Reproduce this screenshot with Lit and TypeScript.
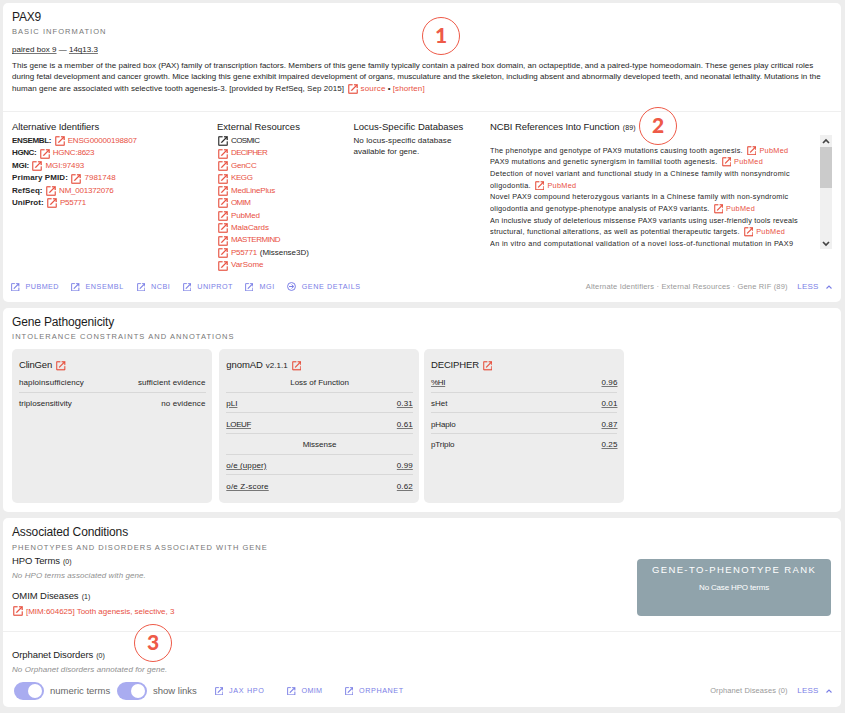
import { LitElement, html, css, svg } from "lit";
import { customElement } from "lit/decorators.js";

const OPEN = svg`<path d="M19.2 19.2H4.8V4.8H11V3H4.6C3.7 3 3 3.7 3 4.6v14.8c0 .9.7 1.6 1.6 1.6h14.8c.9 0 1.6-.7 1.6-1.6V13h-1.8v6.2zM14 3v2h3.6L8.2 14.4l1.4 1.4L19 6.4V10h2V3h-7z" stroke="currentColor" stroke-width=".4"/>`;
const openIcon = (cls = "") => html`<svg class="icon ${cls}" viewBox="2.5 2.5 19 19">${OPEN}</svg>`;
const arrowIcon = html`<svg class="icon round" viewBox="0 0 18 18"><g fill="none" stroke="currentColor" stroke-width="2"><circle cx="9" cy="9" r="7.9"/><path d="M4 9h9M9.3 5l4 4-4 4"/></g></svg>`;
const chevron = html`<svg class="chev" viewBox="0 0 6 4"><path d="M.5 3.5 3 1l2.5 2.5" fill="none" stroke="currentColor" stroke-width="1.1"/></svg>`;

// Text run with its own tracking.
const t = (text: string, ls = 0, cls = "") =>
  html`<span class=${cls} style="letter-spacing:${ls}px">${text}</span>`;
const link = (text: string, ls = 0) => html`<a class="link">${openIcon()}${t(text, ls)}</a>`;

const IDS: [string, number, string, number][] = [
  ["ENSEMBL:", -0.33, "ENSG00000198807", -0.17],
  ["HGNC:", -0.4, "HGNC:8623", -0.22],
  ["MGI:", -0.2, "MGI:97493", -0.1],
  ["Primary PMID:", 0.1, "7981748", 0],
  ["RefSeq:", 0.05, "NM_001372076", -0.2],
  ["UniProt:", 0, "P55771", -0.3],
];
const RES: [string, number, string?][] = [
  ["COSMIC", -0.6], ["DECIPHER", -0.65], ["GenCC", -0.25], ["KEGG", -0.4], ["MedLinePlus", -0.2],
  ["OMIM", -0.6], ["PubMed", -0.15], ["MalaCards", -0.1], ["MASTERMIND", -0.47],
  ["P55771", -0.3, "(Missense3D)"], ["VarSome", -0.05],
];
const REFS: [string, number, boolean?][] = [
  ["The phenotype and genotype of PAX9 mutations causing tooth agenesis.", 0.255, true],
  ["PAX9 mutations and genetic synergism in familial tooth agenesis.", 0.262, true],
  ["Detection of novel variant and functional study in a Chinese family with nonsyndromic", 0.288],
  ["oligodontia.", 0.3, true],
  ["Novel PAX9 compound heterozygous variants in a Chinese family with non-syndromic", 0.27],
  ["oligodontia and genotype-phenotype analysis of PAX9 variants.", 0.25, true],
  ["An inclusive study of deleterious missense PAX9 variants using user-friendly tools reveals", 0.205],
  ["structural, functional alterations, as well as potential therapeutic targets.", 0.24, true],
  ["An in vitro and computational validation of a novel loss-of-functional mutation in PAX9", 0.318],
];

@customElement("app-root")
export class AppRoot extends LitElement {
  static styles = css`
    :host { display: block; box-sizing: border-box; width: 845px; height: 713px; background: #ededed; padding: 3px 4px 0 3px;
      font: 8px "Liberation Sans", Arial, sans-serif; color: #262626; white-space: nowrap; overflow: hidden; }
    .card { background: #fff; border-radius: 5px; box-sizing: border-box; padding: 7px 0 0; position: relative; }
    .c1 { height: 298.5px; }
    .c2 { height: 204px; margin-top: 6.5px; }
    .c3 { height: 189px; margin-top: 6px; }
    .pad { padding: 0 9px; }
    .title { font-size: 12px; line-height: 14px; color: #1c1c1c; }
    .sub { font-size: 7.5px; line-height: 10px; margin-top: 3px; color: #777; }
    .h { font-size: 9.5px; line-height: 12px; color: #222; }
    .cnt { font-size: 7px; margin-left: 0.5px; }
    u { text-decoration-thickness: 1px; text-underline-offset: 1px; text-decoration-color: #777; }
    .gene { margin-top: 7.2px; line-height: 12px; }
    .desc { margin-top: 3.8px; line-height: 11.4px; }
    .line { display: flex; align-items: center; }
    .icon { width: 10px; height: 10px; fill: currentColor; flex: none; display: block; }
    .link { color: #e8503f; display: inline-flex; align-items: center; gap: 3px; margin-left: 3.5px; }
    .plain { margin: 0; }
    .rule { height: 1px; background: #efefef; }
    .gap { margin-top: 16.3px; }
    .cols { display: grid; grid-template-columns: 205px 136.5px 136.5px 1fr; padding: 9.2px 9px 0; height: 129px; }
    .list { margin-top: 2.3px; }
    .list > div { height: 12.45px; line-height: 12.45px; }
    .ext .link { margin-left: 1px; gap: 3px; }
    .ext .dark { color: #262626; }
    .after { margin-left: 3px; }
    .locus { margin-top: 2.4px; line-height: 11.4px; }
    .scroll { display: flex; justify-content: space-between; height: 114px; margin-top: 1.8px; overflow: hidden; }
    .refs { padding-top: 9.2px; font-size: 7.3px; }
    .refs .line { height: 11.67px; line-height: 11.67px; }
    .refs .icon { width: 9.5px; height: 9.5px; }
    .refs .link { margin-left: 4px; }
    .bar { width: 12px; height: 114px; background: #f0f0f0; color: #444; display: flex; flex-direction: column; align-items: center; }
    .bar svg { width: 8px; height: 12px; flex: none; }
    .thumb { width: 12px; height: 41px; background: #cbcbcb; margin-bottom: auto; }
    .foot { display: flex; align-items: center; justify-content: space-between; height: 18px; padding: 0 9px 0 8px; }
    .f1 { margin-top: 28.2px; }
    .btns { display: grid; color: #7a7ee6; font-size: 7.2px; }
    .b1 { grid-template-columns: 60px 65.5px 46.3px 62.2px 41.7px auto; }
    .btns span { white-space: nowrap; }
    .btn { display: flex; align-items: center; gap: 6px; line-height: 12px; }
    .btn .icon { width: 8.5px; height: 8.5px; }
    .btn .round { width: 9px; height: 9px; }
    .meta { display: flex; align-items: center; font-size: 7.5px; color: #999; line-height: 12px; margin-right: 0.5px; }
    .less { color: #7a7ee6; font-size: 8px; margin-left: 9.5px; display: flex; align-items: center; }
    .chev { width: 6px; height: 4px; margin-left: 7px; }
    .tiles { display: flex; padding: 0 9px; margin-top: 7px; }
    .tile { width: 200px; height: 153.5px; box-sizing: border-box; background: #ededed; border-radius: 5px; padding: 9px 6.5px 0 7px; }
    .t2 { margin-left: 7.3px; } .t3 { margin-left: 4.7px; }
    .tile .h { display: flex; align-items: center; height: 14px; }
    .tile .h .icon { color: #e8503f; margin: 2px 0 0 4px; width: 9.5px; height: 9.5px; }
    .ver { font-size: 8px; margin-left: 3px; padding-top: 1px; }
    .row { display: flex; justify-content: space-between; align-items: center; height: 20.65px; padding-top: 2.2px; box-sizing: border-box; border-bottom: 1px solid #d8d8d8; }
    .row:last-child { border-bottom-color: transparent; }
    .row.mid { justify-content: center; }
    .none { font-style: italic; color: #909090; line-height: 12px; }
    .c3 .sub { margin-top: 3.8px; }
    .cond { display: flex; justify-content: space-between; height: 78.7px; }
    .rank { width: 194.5px; height: 57px; margin: 6.7px 0.7px 0 0; background: #90a3ab; border-radius: 4px; color: #fff; text-align: center; }
    .rank .rt { font-size: 9.5px; line-height: 12px; margin: 5px 0 7px; }
    .rank div + div { line-height: 10px; }
    .hpo { margin: 2px 0 2.4px; }
    .omim { margin-top: 7.8px; }
    .dis { height: 14px; margin-top: 1.3px; }
    .dis .link { margin-left: 1px; gap: 3px; }
    .orph { padding-top: 16.5px; }
    .orph .none { margin-top: 2px; }
    .f3 { margin-top: 6px; }
    .left { display: flex; align-items: center; color: #666; font-size: 9.5px; }
    .toggle { width: 30px; height: 18px; border-radius: 9px; background: #a9acf0; box-sizing: border-box; padding: 2px; display: flex; justify-content: flex-end; margin: 0 6px 0 3px; }
    .toggle + span { width: 64px; }
    .knob { width: 14px; height: 14px; border-radius: 50%; background: #fff; }
    .b3 { grid-template-columns: 72.5px 57.5px auto; margin-left: -2.5px; }
    .mark { position: absolute; box-sizing: border-box; width: 38px; height: 38px; border: 1px solid #ee5a48; border-radius: 50%; color: #ee5a48;
      font: 900 21px/34px Lato, sans-serif; text-align: center; }
    .m1 { left: 419px; top: 14px; } .m2 { left: 636px; top: 103.5px; } .m3 { left: 131px; top: 106px; }
  `;

  private row(a: string, la: number, b: string, ua = true, ub = true) {
    const A = t(a, la), B = t(b, 0.1);
    return html`<div class="row">${ua ? html`<u>${A}</u>` : A}${ub ? html`<u>${B}</u>` : B}</div>`;
  }
  private btn(label: string, ls: number, icon = openIcon()) {
    return html`<div class="btn">${icon}${t(label, ls)}</div>`;
  }

  render() {
    return html`
      <section class="card c1">
        <div class="pad">
          <div class="title">${t("PAX9", -0.2)}</div>
          <div class="sub">${t("BASIC INFORMATION", 1.06)}</div>
          <div class="gene"><u>${t("paired box 9", 0.04)}</u> — <u>14q13.3</u></div>
          <div class="desc">
            <div>${t("This gene is a member of the paired box (PAX) family of transcription factors. Members of this gene family typically contain a paired box domain, an octapeptide, and a paired-type homeodomain. These genes play critical roles", 0.021)}</div>
            <div>${t("during fetal development and cancer growth. Mice lacking this gene exhibit impaired development of organs, musculature and the skeleton, including absent and abnormally developed teeth, and neonatal lethality. Mutations in the", 0.001)}</div>
            <div class="line">${t("human gene are associated with selective tooth agenesis-3. [provided by RefSeq, Sep 2015]", 0.048)}${link("source", 0.16)}<span>&nbsp;•&nbsp;</span><a class="link plain">${t("[shorten]", 0.09)}</a></div>
          </div>
        </div>
        <div class="rule gap"></div>
        <div class="cols">
          <div>
            <div class="h">${t("Alternative Identifiers", -0.07)}</div>
            <div class="list">${IDS.map(([a, la, b, lb]) => html`<div class="line"><b>${t(a, la)}</b>${link(b, lb)}</div>`)}</div>
          </div>
          <div>
            <div class="h">External Resources</div>
            <div class="list ext">${RES.map(([n, ls, extra], i) => html`<div class="line"><a class="link ${i ? "" : "dark"}">${openIcon()}${t(n, ls)}</a>${extra ? t(extra, -0.03, "after") : ""}</div>`)}</div>
          </div>
          <div>
            <div class="h">Locus-Specific Databases</div>
            <div class="locus"><div>${t("No locus-specific database", 0.09)}</div><div>${t("available for gene.", 0.02)}</div></div>
          </div>
          <div>
            <div class="h">${t("NCBI References Into Function", -0.068)} <span class="cnt">${t("(89)", 0.2)}</span></div>
            <div class="scroll">
              <div class="refs">${REFS.map(([s, ls, pm]) => html`<div class="line">${t(s, ls)}${pm ? link("PubMed", 0.3) : ""}</div>`)}</div>
              <div class="bar">
                <svg viewBox="0 0 8 12"><path d="M1 8l3-3 3 3" fill="none" stroke="currentColor" stroke-width="1.7"/></svg>
                <div class="thumb"></div>
                <svg viewBox="0 0 8 12"><path d="M1 5l3 3 3-3" fill="none" stroke="currentColor" stroke-width="1.7"/></svg>
              </div>
            </div>
          </div>
        </div>
        <div class="foot f1">
          <div class="btns b1">
            ${this.btn("PUBMED", 0.45)}${this.btn("ENSEMBL", 0.55)}${this.btn("NCBI", 0.5)}${this.btn("UNIPROT", 0.45)}${this.btn("MGI", 0.6)}${this.btn("GENE DETAILS", 0.6, arrowIcon)}
          </div>
          <div class="meta">${t("Alternate Identifiers · External Resources · Gene RIF (89)", 0.184)}<span class="less">${t("LESS", 0.2)}${chevron}</span></div>
        </div>
        <div class="mark m1">1</div>
        <div class="mark m2">2</div>
      </section>

      <section class="card c2">
        <div class="pad">
          <div class="title">${t("Gene Pathogenicity", -0.15)}</div>
          <div class="sub">${t("INTOLERANCE CONSTRAINTS AND ANNOTATIONS", 1.06)}</div>
        </div>
        <div class="tiles">
          <div class="tile">
            <div class="h">${t("ClinGen", -0.19)}${openIcon()}</div>
            ${this.row("haploinsufficiency", 0.11, "sufficient evidence", false, false)}
            ${this.row("triplosensitivity", 0.05, "no evidence", false, false)}
          </div>
          <div class="tile t2">
            <div class="h">${t("gnomAD", -0.08)}<span class="ver">v2.1.1</span>${openIcon()}</div>
            <div class="row mid">Loss of Function</div>
            ${this.row("pLI", 0, "0.31")}
            ${this.row("LOEUF", -0.4, "0.61")}
            <div class="row mid">Missense</div>
            ${this.row("o/e (upper)", 0.1, "0.99")}
            ${this.row("o/e Z-score", 0.18, "0.62")}
          </div>
          <div class="tile t3">
            <div class="h">${t("DECIPHER", -0.14)}${openIcon()}</div>
            ${this.row("%HI", -0.3, "0.96")}
            ${this.row("sHet", 0, "0.01", false)}
            ${this.row("pHaplo", -0.15, "0.87", false)}
            ${this.row("pTriplo", -0.1, "0.25", false)}
          </div>
        </div>
      </section>

      <section class="card c3">
        <div class="pad">
          <div class="title">${t("Associated Conditions", -0.13)}</div>
          <div class="sub">${t("PHENOTYPES AND DISORDERS ASSOCIATED WITH GENE", 1.03)}</div>
          <div class="cond">
            <div>
              <div class="h hpo">${t("HPO Terms", -0.12)} <span class="cnt">(0)</span></div>
              <div class="none">${t("No HPO terms associated with gene.", 0.08)}</div>
              <div class="h omim">${t("OMIM Diseases", -0.08)} <span class="cnt">(1)</span></div>
              <div class="line dis">${link("[MIM:604625] Tooth agenesis, selective, 3", -0.022)}</div>
            </div>
            <div class="rank">
              <div class="rt">${t("GENE-TO-PHENOTYPE RANK", 1.38)}</div>
              <div>${t("No Case HPO terms", -0.17)}</div>
            </div>
          </div>
        </div>
        <div class="rule"></div>
        <div class="pad orph">
          <div class="h">${t("Orphanet Disorders", -0.1)} <span class="cnt">(0)</span></div>
          <div class="none">${t("No Orphanet disorders annotated for gene.", 0.07)}</div>
        </div>
        <div class="foot f3">
          <div class="left">
            <div class="toggle"><div class="knob"></div></div><span>numeric terms</span>
            <div class="toggle"><div class="knob"></div></div><span>show links</span>
            <div class="btns b3">${this.btn("JAX HPO", 0.7)}${this.btn("OMIM", 0.3)}${this.btn("ORPHANET", 0.6)}</div>
          </div>
          <div class="meta">${t("Orphanet Diseases (0)", 0.1)}<span class="less">${t("LESS", 0.2)}${chevron}</span></div>
        </div>
        <div class="mark m3">3</div>
      </section>`;
  }
}
